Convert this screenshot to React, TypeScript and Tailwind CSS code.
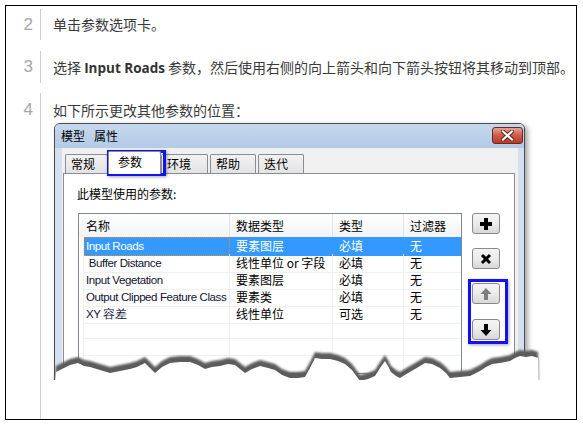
import React from "react";

const CJK = "font-['Noto_Sans_CJK_SC',sans-serif]";

function Tab({ label, w, selected }: { label: string; w: string; selected?: boolean }) {
  if (selected) {
    return (
      <div className={`${w} h-[23px] -mb-[1px] border border-b-0 border-[#898c95] bg-white rounded-t-[2px] text-[12px] leading-[20px] pl-[9px] z-10`}>
        {label}
      </div>
    );
  }
  return (
    <div className={`${w} h-[19px] border border-b-0 border-[#898c95] bg-gradient-to-b from-[#f2f2f2] to-[#e3e3e3] rounded-t-[2px] text-[12px] leading-[18px] pl-[5px]`}>
      {label}
    </div>
  );
}

function Btn({ children, top }: { children: React.ReactNode; top: string }) {
  return (
    <div className={`${top} w-[28px] h-[21px] border border-[#8a8a8a] rounded-[3px] bg-gradient-to-b from-[#f4f4f4] via-[#ebebeb] to-[#d8d8d8] flex items-center justify-center`}>
      {children}
    </div>
  );
}

const rows = [
  { n: "Input Roads", t: "要素图层", k: "必填", f: "无", sel: true },
  { n: " Buffer Distance", t: "线性单位 or 字段", k: "必填", f: "无" },
  { n: "Input Vegetation", t: "要素图层", k: "必填", f: "无" },
  { n: "Output Clipped Feature Class", t: "要素类", k: "必填", f: "无" },
  { n: "XY 容差", t: "线性单位", k: "可选", f: "无" },
  { n: "", t: "", k: "", f: "" },
  { n: "", t: "", k: "", f: "" },
  { n: "", t: "", k: "", f: "" },
];

const tearTop: [number, number][] = [
  [56, 366], [62, 363], [70, 359], [78, 357], [84, 360], [90, 361], [100, 364], [110, 367], [120, 365], [130, 363], [137, 361], [145, 357], [150, 362], [155, 367], [162, 361], [170, 357], [180, 356], [190, 356], [198, 359], [205, 363], [212, 361], [220, 360], [228, 358], [235, 359], [240, 363], [245, 367], [252, 363], [260, 360], [268, 362], [275, 364], [282, 369], [290, 372], [298, 372], [305, 371], [310, 362], [315, 352], [322, 353], [330, 353], [338, 355], [345, 358], [352, 364], [360, 375], [368, 373], [375, 370], [380, 362], [385, 355], [388, 360], [391, 366], [396, 370], [400, 372], [408, 367], [415, 363], [420, 360], [425, 357], [432, 358], [440, 362], [446, 367], [450, 372], [460, 371], [470, 370], [476, 367], [480, 365], [486, 361], [492, 358], [500, 357], [510, 355], [515, 352], [520, 350], [526, 351], [532, 350], [538, 352],
];

function Tear() {
  const top = tearTop.map(([x, y]) => `${x},${y}`).join(" ");
  const shadow = `${top} 540,430 50,430`;
  const white = tearTop.map(([x, y]) => `${x},${y + 6}`).join(" ") + " 540,430 50,430";
  return (
    <svg className="absolute left-[48px] top-[335px]" width="495" height="84" viewBox="48 335 495 84">
      <defs>
        <filter id="bl" x="-5%" y="-20%" width="110%" height="140%">
          <feGaussianBlur stdDeviation="1.1" />
        </filter>
      </defs>
      <polygon points={shadow} fill="#5c5c5c" filter="url(#bl)" />
      <polygon points={white} fill="#ffffff" />
      <rect x="48" y="380" width="495" height="40" fill="#ffffff" />
    </svg>
  );
}

export default function App() {
  return (
    <div className={`relative w-[583px] h-[424px] bg-white overflow-hidden ${CJK}`}>
      <div className="pt-[5px] pl-[5px]">
        <div className="w-[572px] h-[415px] border border-black pt-[3px] flex flex-col">
          {/* step 2 */}
          <div className="flex h-[31px]">
            <div className="w-[34px] pr-[7px] text-right font-['Liberation_Sans',sans-serif] text-[17px] leading-[31px] text-[#a6a6a6]">2</div>
            <div className="flex-1 border-l border-[#cfcfcf] pl-[12px] text-[14px] leading-[31px] text-[#3a3a3a]">单击参数选项卡。</div>
          </div>
          {/* step 3 */}
          <div className="flex h-[32px] mt-[11px]">
            <div className="w-[34px] pr-[7px] text-right font-['Liberation_Sans',sans-serif] text-[17px] leading-[32px] text-[#a6a6a6]">3</div>
            <div className="flex-1 border-l border-[#cfcfcf] pl-[12px] text-[14px] leading-[32px] text-[#3a3a3a] whitespace-nowrap">
              选择 <b className="font-['Open_Sans','Noto_Sans_CJK_SC',sans-serif] font-bold text-[13.5px] text-[#333]">Input Roads</b> 参数，然后使用右侧的向上箭头和向下箭头按钮将其移动到顶部。
            </div>
          </div>
          {/* step 4 */}
          <div className="flex flex-1 mt-[10px]">
            <div className="w-[34px] pr-[7px] pt-[6px] text-right font-['Liberation_Sans',sans-serif] text-[17px] leading-[22px] text-[#a6a6a6]">4</div>
            <div className="flex-1 border-l border-[#cfcfcf] pl-[12px] pt-[7px]">
              <div className="text-[14px] leading-[20px] text-[#3a3a3a]">如下所示更改其他参数的位置：</div>
              {/* dialog */}
              <div className="relative mt-[3px] ml-[1px] w-[471px] h-[262px] border border-[#4a4a4a] rounded-t-[6px] bg-[#d3e0f0] shadow-[3px_2px_5px_rgba(0,0,0,0.35)] overflow-hidden">
                <div className="h-[24px] bg-gradient-to-b from-[#c5d8ee] to-[#b3cae5] flex items-center pl-[6px] text-[12px] text-black">
                  <span>模型</span>
                  <span className="ml-[9px]">属性</span>
                </div>
                {/* close button */}
                <div className="absolute right-[1px] top-[3px] w-[31px] h-[17px] rounded-[3px] border border-[#6b2820] bg-gradient-to-b from-[#e2a293] via-[#cf5a47] to-[#b9382a] flex items-center justify-center">
                  <svg width="13" height="11" viewBox="0 0 13 11">
                    <path d="M2 1.5 L11 9.5 M11 1.5 L2 9.5" stroke="#5a1f18" strokeWidth="4" strokeLinecap="square" />
                    <path d="M2 1.5 L11 9.5 M11 1.5 L2 9.5" stroke="#ffffff" strokeWidth="2.2" strokeLinecap="square" />
                  </svg>
                </div>
                {/* client */}
                <div className="ml-[7px] mr-[6px] h-[240px] bg-[#f0f0f0] pt-[6px] pl-[1px]">
                  <div className="flex items-end pl-[2px] h-[19px] relative">
                    <Tab label="常规" w="w-[43px]" />
                    <Tab label="参数" w="w-[53px]" selected />
                    <Tab label="环境" w="w-[47px]" />
                    <div className="w-[2px]" />
                    <Tab label="帮助" w="w-[46px]" />
                    <div className="w-[2px]" />
                    <Tab label="迭代" w="w-[46px]" />
                  </div>
                  <div className="w-[452px] h-[220px] border border-[#898c95] bg-white flex">
                    <div className="pl-[13px]">
                      <div className="pt-[12px] text-[12px] leading-[16px] text-black">此模型使用的参数:</div>
                      <div className="mt-[11px] ml-[1px] w-[384px] border border-[#828790] bg-white">
                        <div className="grid grid-cols-[151px_103px_71px_57px] h-[23px] bg-gradient-to-b from-white to-[#f2f3f5] text-[12px] leading-[23px] text-black">
                          <div className="pl-[7px] border-r border-[#e3e4e6]">名称</div>
                          <div className="pl-[6px] border-r border-[#e3e4e6]">数据类型</div>
                          <div className="pl-[6px] border-r border-[#e3e4e6]">类型</div>
                          <div className="pl-[6px]">过滤器</div>
                        </div>
                        {rows.map((r, i) => (
                          <div key={i} className="grid grid-cols-[5px_146px_103px_71px_57px] h-[17px] text-[12px] leading-[18px]">
                            <div className="border-r border-[#f0f0f0]" />
                            <div className={`pl-[2px] whitespace-pre font-['Liberation_Sans',sans-serif] text-[11.5px] tracking-[-0.4px] border-r border-b ${r.sel ? "bg-[#3399ff] text-white border-[#3399ff] outline-1 outline-dotted outline-[#e08a2e] -outline-offset-1" : "text-[#111133] border-[#f0f0f0]"}`}>{r.n}</div>
                            <div className={`pl-[6px] whitespace-nowrap border-r border-b ${r.sel ? "bg-[#3399ff] text-white border-[#3399ff]" : "text-black border-[#f0f0f0]"}`}>{r.t}</div>
                            <div className={`pl-[6px] border-r border-b ${r.sel ? "bg-[#3399ff] text-white border-[#3399ff]" : "text-black border-[#f0f0f0]"}`}>{r.k}</div>
                            <div className={`pl-[6px] border-b ${r.sel ? "bg-[#3399ff] text-white border-[#3399ff]" : "text-black border-[#f0f0f0]"}`}>{r.f}</div>
                          </div>
                        ))}
                      </div>
                    </div>
                    <div className="ml-[10px] pt-[39px] flex flex-col">
                      <Btn top="">
                        <svg width="14" height="14" viewBox="0 0 14 14"><path d="M7 1 V13 M1 7 H13" stroke="#000" strokeWidth="4" /></svg>
                      </Btn>
                      <Btn top="mt-[14px]">
                        <svg width="12" height="12" viewBox="0 0 12 12"><path d="M2 2 L10 10 M10 2 L2 10" stroke="#000" strokeWidth="3" /></svg>
                      </Btn>
                      <Btn top="mt-[14px]">
                        <svg width="12" height="14" viewBox="0 0 12 14"><path d="M6 1 L11.5 7 H8 V13 H4 V7 H0.5 Z" fill="#7d7d7d" /></svg>
                      </Btn>
                      <Btn top="mt-[15px]">
                        <svg width="12" height="14" viewBox="0 0 12 14"><path d="M4 1 H8 V7 H11.5 L6 13 L0.5 7 H4 Z" fill="#000" /></svg>
                      </Btn>
                    </div>
                  </div>
                </div>
                {/* blue highlight on tab */}
                <div className="absolute left-[52px] top-[26px] w-[59px] h-[26px] border-[3px] border-[#1212ee] shadow-[1px_1px_3px_rgba(0,0,0,0.35)]" />
                {/* blue highlight on arrows */}
                <div className="absolute left-[413px] top-[155px] w-[40px] h-[65px] border-[3px] border-[#1212ee] shadow-[1px_1px_3px_rgba(0,0,0,0.35)]" />
              </div>
            </div>
          </div>
        </div>
      </div>
      <Tear />
    </div>
  );
}
